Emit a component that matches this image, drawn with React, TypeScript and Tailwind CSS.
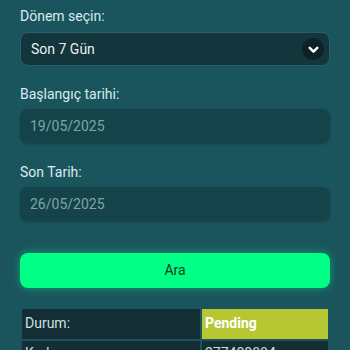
import React from "react";

export default function App() {
  return (
    <div className="w-[350px] h-[350px] overflow-hidden bg-[#1a555e] font-['Roboto',sans-serif]">
      <div className="px-5 pt-[7px] flex flex-col">
        {/* Period select */}
        <label className="text-[14px] leading-[18px] text-[#dcebee]">Dönem seçin:</label>
        <div className="mt-[7px] h-[34px] rounded-lg bg-[#12363c] border border-[#2a5f66] flex items-center justify-between pl-[10px] pr-[5px]">
          <span className="text-[14px] text-[#e6f0f2]">Son 7 Gün</span>
          <span className="w-[22px] h-[22px] rounded-full bg-[#0c2226] flex items-center justify-center">
            <svg width="13" height="13" viewBox="0 0 24 24" fill="none" stroke="#ffffff" strokeWidth="4.5" strokeLinecap="round" strokeLinejoin="round">
              <path d="M5 9l7 7 7-7" />
            </svg>
          </span>
        </div>

        {/* Start date */}
        <label className="mt-[19px] text-[14px] leading-[18px] text-[#dcebee]">Başlangıç tarihi:</label>
        <div className="mt-[6px] h-[34px] rounded-lg bg-[#15434a] shadow-[0_1px_3px_rgba(0,0,0,0.25)] flex items-center pl-[10px]">
          <span className="text-[14px] text-[#7fa3a8]">19/05/2025</span>
        </div>

        {/* End date */}
        <label className="mt-[20px] text-[14px] leading-[18px] text-[#dcebee]">Son Tarih:</label>
        <div className="mt-[6px] h-[34px] rounded-lg bg-[#15434a] shadow-[0_1px_3px_rgba(0,0,0,0.25)] flex items-center pl-[10px]">
          <span className="text-[14px] text-[#7fa3a8]">26/05/2025</span>
        </div>

        {/* Search button */}
        <button className="mt-[32px] h-[35px] rounded-lg bg-[#00ff85] shadow-[0_0_8px_rgba(0,255,130,0.45)] text-[14px] text-[#0b3b22]">
          Ara
        </button>

        {/* Result table */}
        <table className="mt-[19px] border-separate border-spacing-[2px] text-[14px] w-[310px]">
          <tbody>
            <tr className="h-[30px]">
              <td className="bg-[#132e34] text-[#cfe0e3] pl-[3px] align-top pt-[4px] w-[178px]">Durum:</td>
              <td className="bg-[#b6c733] text-white font-bold pl-[3px] align-top pt-[4px]">Pending</td>
            </tr>
            <tr className="h-[30px]">
              <td className="bg-[#132e34] text-[#cfe0e3] pl-[3px] align-top pt-[2px]">Kod:</td>
              <td className="bg-[#132e34] text-[#cfe0e3] pl-[3px] align-top pt-[2px]">277400884</td>
            </tr>
          </tbody>
        </table>
      </div>
    </div>
  );
}
